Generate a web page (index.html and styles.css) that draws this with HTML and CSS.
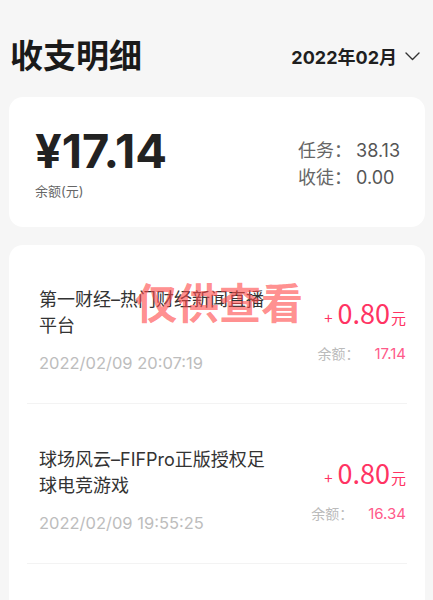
FILE: index.html
```html
<!DOCTYPE html>
<html lang="zh-CN">
<head>
  <meta charset="UTF-8">
  <meta name="viewport" content="width=device-width, initial-scale=1">
  <title>收支明细</title>
  <link rel="stylesheet" href="styles.css">
</head>
<body>
  <div class="topbar">
    <h1 class="title">收支明细</h1>
    <div class="month">
      2022年02月
      <svg class="chevron" width="15" height="9" viewBox="0 0 15 9">
        <path d="M1 1 L7.5 7.5 L14 1" fill="none" stroke="#333" stroke-width="1.4" stroke-linecap="round" stroke-linejoin="round"/>
      </svg>
    </div>
  </div>

  <div class="card summary">
    <div class="balance">
      <div class="amount">¥17.14</div>
      <div class="amount-label">余额(元)</div>
    </div>
    <div class="stats">
      <p class="stat"><span class="stat-name">任务：</span>38.13</p>
      <p class="stat"><span class="stat-name">收徒：</span>0.00</p>
    </div>
  </div>

  <div class="card records">
    <div class="watermark">仅供查看</div>

    <div class="record">
      <div class="record-info">
        <p class="record-title">第一财经–热门财经新闻直播平台</p>
        <p class="record-time">2022/02/09 20:07:19</p>
      </div>
      <div class="record-money">
        <p class="income"><span class="plus">+</span>0.80<span class="unit">元</span></p>
        <p class="left"><span class="left-name">余额：</span>17.14</p>
      </div>
    </div>

    <div class="record">
      <div class="record-info">
        <p class="record-title">球场风云–FIFPro正版授权足球电竞游戏</p>
        <p class="record-time">2022/02/09 19:55:25</p>
      </div>
      <div class="record-money">
        <p class="income"><span class="plus">+</span>0.80<span class="unit">元</span></p>
        <p class="left"><span class="left-name">余额：</span>16.34</p>
      </div>
    </div>

    <div class="record">
      <div class="record-info">
        <p class="record-title">球场风云–FIFPro正版授权足球电竞游戏</p>
        <p class="record-time">2022/02/09 19:40:02</p>
      </div>
      <div class="record-money">
        <p class="income"><span class="plus">+</span>0.80<span class="unit">元</span></p>
        <p class="left"><span class="left-name">余额：</span>15.54</p>
      </div>
    </div>
  </div>
</body>
</html>
```

FILE: styles.css
```css
html {
  font-family: Inter, "Noto Sans CJK SC", sans-serif;
}
body {
  margin: 0;
  background-color: #f6f6f6;
  color: #333;
}
p {
  margin: 0;
}
.topbar {
  display: flex;
  align-items: center;
  justify-content: space-between;
  padding: 34px 13px 0 10px;
}
.title {
  margin: 0;
  font-size: 33px;
  line-height: 44px;
  font-weight: bold;
  color: #1a1a1a;
}
.month {
  display: flex;
  align-items: center;
  gap: 8px;
  font-size: 18px;
  font-weight: bold;
  color: #1f1f1f;
}
.chevron {
  display: block;
}
.card {
  background-color: #fff;
  border-radius: 14px;
  margin: 0 8px 0 9px;
}
.summary {
  margin-top: 19px;
  display: flex;
  justify-content: space-between;
  align-items: flex-start;
  padding: 29px 25px 27px 26px;
}
.amount {
  font-size: 47px;
  line-height: 50px;
  font-weight: bold;
  color: #222;
}
.amount-label {
  margin-top: 6px;
  font-size: 13px;
  line-height: 18px;
  color: #666;
}
.stats {
  padding-top: 11px;
}
.stat {
  font-size: 18px;
  line-height: 27px;
  color: #555;
}
.stat-name {
  color: #666;
  margin-right: 4px;
}
.records {
  position: relative;
  margin-top: 18px;
  padding-bottom: 20px;
}
.record {
  display: flex;
  align-items: center;
  justify-content: space-between;
  margin: 0 18px;
  padding: 42px 1px 29px 12px;
  border-bottom: 1px solid #f3f3f3;
}
.record + .record {
  padding-top: 43px;
}
.record-title {
  width: 238px;
  font-size: 18px;
  line-height: 26px;
  color: #333;
}
.record-time {
  margin-top: 13px;
  font-size: 16.5px;
  line-height: 22px;
  color: #bdbdbd;
}
.record-money {
  text-align: right;
}
.income {
  font-family: "Noto Sans CJK SC", sans-serif;
  font-size: 27px;
  line-height: 32px;
  color: #ff3363;
}
.plus {
  font-size: 15px;
  margin-right: 5px;
}
.unit {
  font-size: 15px;
  margin-left: 1px;
}
.left {
  margin-top: 10px;
  font-size: 15px;
  line-height: 20px;
  color: #ff5a8a;
}
.left-name {
  font-size: 14px;
  color: #bbb;
  margin-right: 15px;
}
.watermark {
  position: absolute;
  top: 31px;
  left: 126px;
  font-size: 42px;
  line-height: 56px;
  font-weight: bold;
  color: rgba(255, 70, 70, 0.62);
  pointer-events: none;
}
```
